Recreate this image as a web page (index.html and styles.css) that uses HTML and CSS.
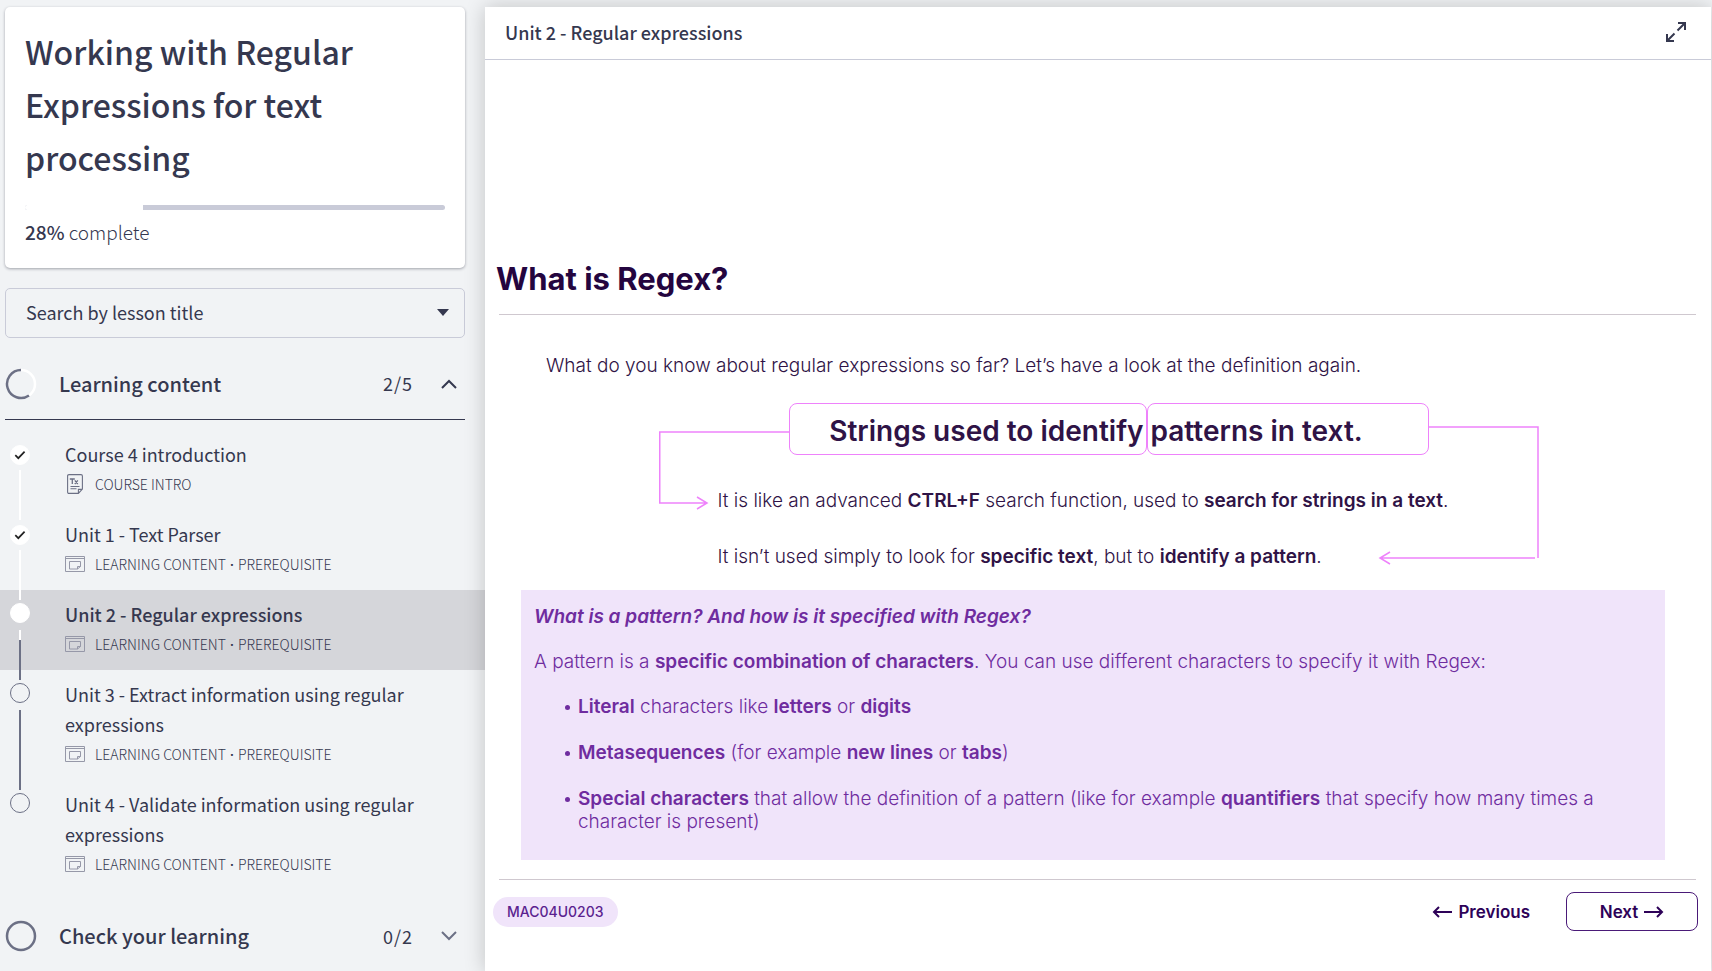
FILE: index.html
```html
<!DOCTYPE html>
<html lang="en">
<head>
<meta charset="utf-8">
<title>Unit 2 - Regular expressions</title>
<link rel="stylesheet" href="styles.css">
</head>
<body>
<svg class="defs" aria-hidden="true">
  <symbol id="i-check" viewBox="0 0 12 10"><path d="M1.3 5.2l3 3L10.6 1.6" fill="none" stroke="currentColor" stroke-width="1.7"/></symbol>
  <symbol id="i-content" viewBox="0 0 20 16">
    <path d="M.5.5h19v15H.5zM.5 2.500h19M4.500 5.500h11v5l-3 2.500h-8zM15.500 10.500h-3v2.500" fill="none" stroke="currentColor"/>
  </symbol>
  <symbol id="i-text" viewBox="0 0 16 20">
    <path d="M2 .6h12q1.400 0 1.400 1.400v13l-4 4.400H2q-1.400 0-1.400-1.400V2Q.6.600 2 .6zM11.400 19.400v-4h4M3.500 12.500h9M3.500 14.800h6" fill="none" stroke="currentColor" stroke-width="1.100"/>
    <path d="M2.800 5h5M5.300 5v5M7.800 6.400l3 3.600M10.800 6.400l-3 3.600" fill="none" stroke="currentColor" stroke-width="1.300"/>
  </symbol>
</svg>
<div class="app">
  <aside class="sidebar">
    <section class="course">
      <h1 class="course-title">Working with Regular Expressions for text processing</h1>
      <div class="progress"><div class="progress-done" style="width:28%"></div></div>
      <p class="progress-label"><b>28%</b> complete</p>
    </section>
    <button class="lesson-search" type="button">Search by lesson title
      <svg width="12" height="7" viewBox="0 0 12 7"><path d="M0 0h12L6 7z" fill="currentColor"/></svg>
    </button>

    <button class="group open" type="button" aria-expanded="true">
      <svg width="32" height="32" viewBox="0 0 32 32" fill="none">
        <circle cx="16" cy="16" r="14" stroke="#fff" stroke-width="2.500"/>
        <path d="M16 2a14 14 0 1 0 8 25.500" stroke="#6c7085" stroke-width="2.500"/>
      </svg>
      <span class="group-name">Learning content</span>
      <span class="group-count">2/5</span>
      <svg width="16" height="10" viewBox="0 0 16 10" fill="none"><path d="M1 9l7-7 7 7" stroke="currentColor" stroke-width="2"/></svg>
    </button>

    <ul class="lessons">
      <li class="lesson done">
        <div class="rail"><span class="dot"><svg width="12" height="10"><use href="#i-check"/></svg></span><span class="line"></span></div>
        <div><a class="name" href="#intro">Course 4 introduction</a>
        <p class="meta"><svg class="doc" width="16" height="20"><use href="#i-text"/></svg><span>COURSE INTRO</span></p></div>
      </li>
      <li class="lesson done">
        <div class="rail"><span class="dot"><svg width="12" height="10"><use href="#i-check"/></svg></span><span class="line"></span></div>
        <div><a class="name" href="#unit1">Unit 1 - Text Parser</a>
        <p class="meta"><svg width="20" height="16"><use href="#i-content"/></svg><span>LEARNING CONTENT <span class="sep">·</span> PREREQUISITE</span></p></div>
      </li>
      <li class="lesson current">
        <div class="rail"><span class="dot"></span><span class="line"></span></div>
        <div><a class="name" href="#unit2">Unit 2 - Regular expressions</a>
        <p class="meta"><svg width="20" height="16"><use href="#i-content"/></svg><span>LEARNING CONTENT <span class="sep">·</span> PREREQUISITE</span></p></div>
      </li>
      <li class="lesson">
        <div class="rail"><span class="dot"></span><span class="line"></span></div>
        <div><a class="name" href="#unit3">Unit 3 - Extract information using regular expressions</a>
        <p class="meta"><svg width="20" height="16"><use href="#i-content"/></svg><span>LEARNING CONTENT <span class="sep">·</span> PREREQUISITE</span></p></div>
      </li>
      <li class="lesson">
        <div class="rail"><span class="dot"></span></div>
        <div><a class="name" href="#unit4">Unit 4 - Validate information using regular expressions</a>
        <p class="meta"><svg width="20" height="16"><use href="#i-content"/></svg><span>LEARNING CONTENT <span class="sep">·</span> PREREQUISITE</span></p></div>
      </li>
    </ul>

    <button class="group" type="button" aria-expanded="false">
      <svg width="32" height="32" viewBox="0 0 32 32" fill="none"><circle cx="16" cy="16" r="14" stroke="#6c7085" stroke-width="2.500"/></svg>
      <span class="group-name">Check your learning</span>
      <span class="group-count">0/2</span>
      <svg width="16" height="10" viewBox="0 0 16 10" fill="none"><path d="M1 1l7 7 7-7" stroke="#6c7085" stroke-width="2"/></svg>
    </button>
  </aside>

  <main class="viewer">
    <header class="viewer-head">
      <h2 class="viewer-title">Unit 2 - Regular expressions</h2>
      <button class="expand" type="button" aria-label="Full screen">
        <svg width="20" height="20" viewBox="0 0 20 20" fill="none" stroke="currentColor" stroke-width="2"><path d="M12 1h7v7M19 1l-7.500 7.500M1 12v7h7M1 19l7.500-7.500"/></svg>
      </button>
    </header>
    <article class="slide">
      <h2 class="slide-title">What is Regex?</h2>
      <hr class="rule">
      <p class="lead">What do you know about regular expressions so far? Let’s have a look at the definition again.</p>
      <div class="diagram">
        <svg class="wires" width="880" height="168" viewBox="0 0 880 168" fill="none" stroke="#ee82fb" stroke-width="1.500">
          <path d="M130 29H.75v71H48M38 94l10 6-10 6"/>
          <path d="M770 24h109v131M876 155H721M731 149l-10 6 10 6"/>
        </svg>
        <div class="phrase">
          <span class="half first">Strings used to identify</span><span class="half second">patterns in text.</span>
        </div>
        <p class="note">It is like an advanced <b>CTRL+F</b> search function, used to <b>search for strings in a text</b>.</p>
        <p class="note">It isn’t used simply to look for <b>specific text</b>, but to <b>identify a pattern</b>.</p>
      </div>
      <section class="callout">
        <p><b><i>What is a pattern? And how is it specified with Regex?</i></b></p>
        <p>A pattern is a <b>specific combination of characters</b>. You can use different characters to specify it with Regex:</p>
        <ul class="kinds">
          <li><b>Literal</b> characters like <b>letters</b> or <b>digits</b></li>
          <li><b>Metasequences</b> (for example <b>new lines</b> or <b>tabs</b>)</li>
          <li><b>Special characters</b> that allow the definition of a pattern (like for example <b>quantifiers</b> that specify how many times a character is present)</li>
        </ul>
      </section>
      <hr class="rule">
      <footer class="slide-foot">
        <span class="code">MAC04U0203</span>
        <button class="nav" type="button"><svg width="20" height="12" viewBox="0 0 20 12" fill="none" stroke="currentColor" stroke-width="2"><path d="M20 6H2M7 1L2 6l5 5"/></svg>Previous</button>
        <button class="nav next" type="button">Next<svg width="20" height="12" viewBox="0 0 20 12" fill="none" stroke="currentColor" stroke-width="2"><path d="M0 6h18M13 1l5 5-5 5"/></svg></button>
      </footer>
    </article>
  </main>
</div>
</body>
</html>
```
FILE: styles.css
```css
* { box-sizing: border-box; }
body {
  margin: 0;
  background: #f1f3f5;
  color: #35384f;
  font-family: "Noto Sans CJK SC", "Open Sans", sans-serif;
  font-size: 18px;
}
h1, h2, p, ul { margin: 0; padding: 0; }
button { font: inherit; color: inherit; background: none; border: 0; padding: 0; cursor: pointer; }
a { color: inherit; text-decoration: none; }
svg { flex: none; }
b { font-weight: 600; }
.defs { position: absolute; width: 0; height: 0; }
.app { display: flex; min-height: 100vh; padding: 7px 1px 0 0; overflow: hidden; }

.sidebar { flex: none; width: 485px; }
.course {
  margin: 0 20px 20px 5px;
  padding: 18px 20px 21px;
  background: #fff;
  border-radius: 5px;
  box-shadow: 0 1px 3px rgba(40, 42, 60, .4);
}
.course-title { font-size: 32px; font-weight: 500; line-height: 53px; }
.progress { height: 5px; margin-top: 21px; border-radius: 3px; background: #c9cbd8; overflow: hidden; }
.progress-done { height: 100%; background: #fff; }
.progress-label { margin-top: 7px; font-size: 19px; font-weight: 300; line-height: 30px; }
.progress-label b { font-weight: 500; }
.lesson-search {
  display: flex;
  align-items: center;
  justify-content: space-between;
  width: 460px;
  height: 50px;
  margin: 0 0 10px 5px;
  padding: 0 15px 2px 20px;
  border: 1px solid #c9cbd8;
  border-radius: 5px;
}

.group {
  display: grid;
  grid-template-columns: 32px 1fr auto 16px;
  align-items: center;
  width: 460px;
  height: 72px;
  margin-left: 5px;
  padding-right: 8px;
  text-align: left;
}
.group.open { border-bottom: 1px solid #35384f; }
.group-name { padding: 0 0 1px 22px; font-size: 20px; font-weight: 500; }
.group-count { padding: 0 28px 1px 0; letter-spacing: 1px; }

.lessons { list-style: none; padding: 10px 0; }
.lesson { display: grid; grid-template-columns: 40px 1fr; column-gap: 25px; padding: 9px 60px 11px 0; }
.lesson.current { background: #d5d6da; }
.rail {
  position: relative;
  z-index: 1;
  display: flex;
  flex-direction: column;
  align-items: center;
  gap: 7px;
  margin-bottom: -21px;
  padding-top: 4px;
}
.done .rail { gap: 5px; padding-top: 6px; }
.dot {
  display: grid;
  place-items: center;
  width: 20px;
  height: 20px;
  border: 1px solid #6c7085;
  border-radius: 50%;
}
.done .dot, .current .dot { border-color: #fff; background: #fff; color: #222; }
.line { flex: 1; width: 2px; background: #6c7085; }
.done .line { background: #fff; }
.current .line { border-top: 10px solid #fff; }
.name { display: block; line-height: 30px; }
.current .name { font-weight: 500; }
.meta { display: flex; align-items: center; gap: 10px; height: 30px; font-size: 14px; font-weight: 300; }
.meta svg { color: #9698a8; }
.meta .doc { margin: 0 2px; color: #6c7085; }
.sep { margin: 0 1px; font-family: "Open Sans", sans-serif; font-weight: 600; }

.viewer {
  position: relative;
  z-index: 2;
  flex: 1;
  min-width: 0;
  background: #fff;
  box-shadow: 0 0 20px rgba(0, 0, 0, .2);
}
.viewer-head {
  display: flex;
  align-items: center;
  justify-content: space-between;
  height: 53px;
  padding: 0 25px 3px 20px;
  border-bottom: 1px solid #c9cbd8;
}
.viewer-title { font-size: 18px; font-weight: 500; }
.expand { display: flex; }

.slide { padding: 195px 13px 0 8px; font: 300 19px/24px Inter, sans-serif; color: #2f1346; }
.slide-title { margin-left: 3px; font: 700 31px/48px Inter, sans-serif; color: #24053f; }
.rule { height: 1px; margin: 11px 2px 0 6px; border: 0; background: #cfc8cf; }
.lead { margin: 39px 0 0 53px; }
.diagram { position: relative; width: 880px; margin: 25px calc(50% - 443px) 0 auto; }
.wires { position: absolute; left: 0; top: 0; }
.phrase { display: flex; padding-left: 130px; font: 600 28px/46px Inter, sans-serif; }
.half { padding-top: 4px; border: 1px solid #ee82fb; border-radius: 8px; }
.first { width: 358px; padding-right: 2px; text-align: right; }
.second { width: 282px; padding-left: 3px; }
.note { margin: 34px 0 32px; padding-left: 59px; }
.note + .note { margin: 0; }
.callout {
  margin: 21px 33px 0 28px;
  padding: 15px 60px 27px 13px;
  line-height: 23px;
  background: #f0e4fa;
  color: #6f2c9f;
}
.callout > * + * { margin-top: 22px; }
.kinds li + li { margin-top: 23px; }
.kinds { list-style: none; padding-left: 30px; }
.kinds li { position: relative; padding-left: 14px; }
.kinds li::before { content: ""; position: absolute; left: 1px; top: 10px; width: 5px; height: 5px; border-radius: 50%; background: currentColor; }
.callout + .rule { margin-top: 19px; }
.slide-foot { display: flex; align-items: center; padding-top: 12px; }
.code {
  margin-right: auto;
  padding: 0 14px;
  border-radius: 15px;
  background: #f0e4fa;
  color: #5b1f8f;
  font-size: 14px;
  font-weight: 500;
  line-height: 30px;
}
.nav { display: flex; align-items: center; gap: 6px; color: #2e0258; font-size: 17px; font-weight: 600; }
.next {
  justify-content: center;
  width: 132px;
  height: 39px;
  margin-left: 36px;
  border: 1px solid #4a1a78;
  border-radius: 8px;
}
```
